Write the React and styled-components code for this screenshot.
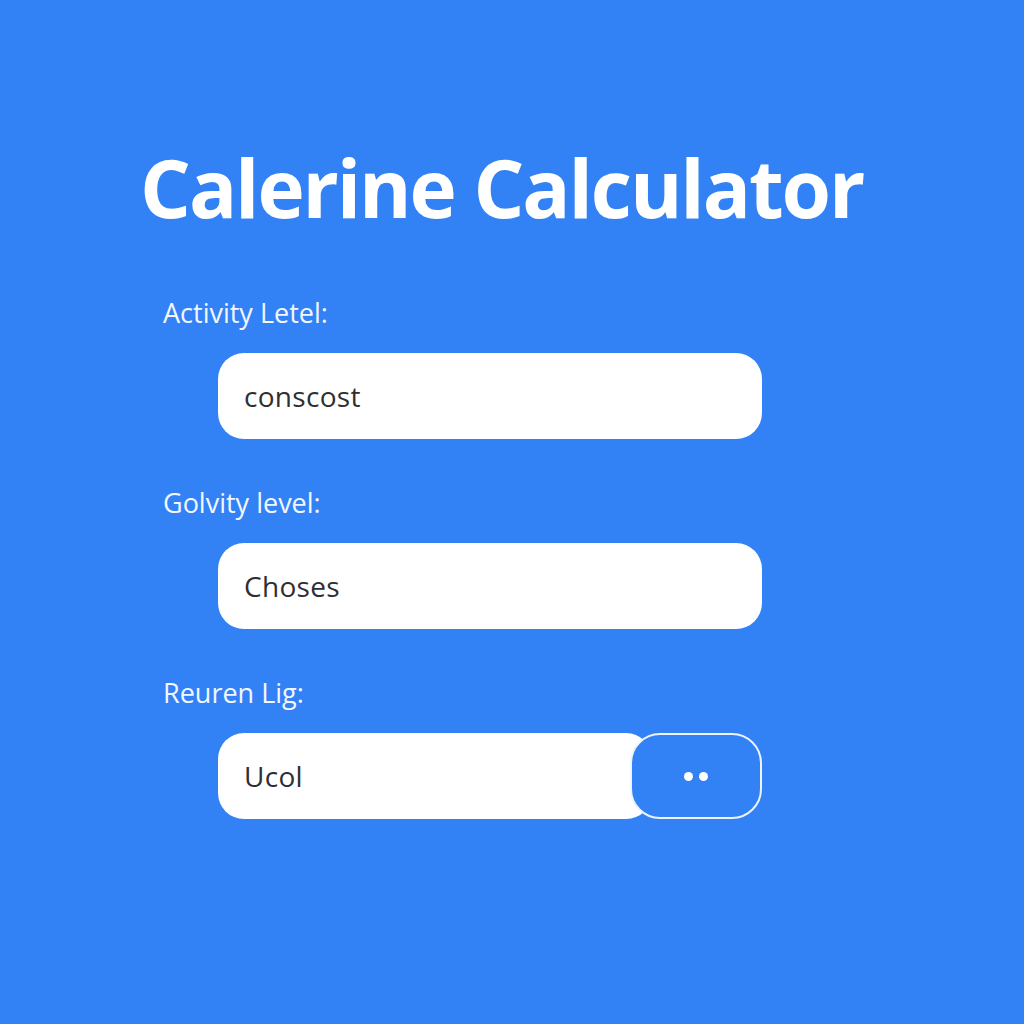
import React from "react";
import styled, { createGlobalStyle } from "styled-components";

const Global = createGlobalStyle`
  html, body { margin: 0; padding: 0; background: #3282f5; }
  body { font-family: "Open Sans", "Liberation Sans", sans-serif; }
`;

const Page = styled.div`
  width: 1024px;
  height: 1024px;
  box-sizing: border-box;
  background: #3282f5;
  display: flex;
  flex-direction: column;
  padding: 137px 0 0 163px;
`;

const Title = styled.h1`
  margin: 0 0 58px -23px;
  font-family: "Open Sans", sans-serif;
  font-weight: 700;
  font-size: 80px;
  line-height: 100px;
  letter-spacing: -2.1px;
  color: #ffffff;
  white-space: nowrap;
`;

const Form = styled.div`
  display: flex;
  flex-direction: column;
  gap: 46px;
`;

const Field = styled.div`
  display: flex;
  flex-direction: column;
  gap: 22px;
`;

const Label = styled.label`
  font-family: "Open Sans", sans-serif;
  font-weight: 400;
  font-size: 27px;
  line-height: 36px;
  letter-spacing: 0px;
  color: #f2f6ff;
`;

const Row = styled.div`
  display: flex;
  align-items: center;
  margin-left: 55px;
  width: 544px;
`;

const Input = styled.div`
  box-sizing: border-box;
  flex: 1;
  height: 86px;
  border-radius: 26px;
  background: #ffffff;
  display: flex;
  align-items: center;
  padding-left: 26px;
  font-family: "Open Sans", sans-serif;
  font-weight: 500;
  font-size: 28px;
  letter-spacing: 0.3px;
  color: #2f2f33;
  margin-right: ${(p) => (p.$joined ? "-22px" : "0")};
`;

const DotsButton = styled.button`
  box-sizing: border-box;
  position: relative;
  width: 132px;
  height: 86px;
  border-radius: 30px;
  border: 2px solid #eef4ff;
  background: #3282f5;
  display: flex;
  align-items: center;
  justify-content: center;
  gap: 6px;
  padding: 0;
`;

const Dot = styled.span`
  width: 9px;
  height: 9px;
  border-radius: 50%;
  background: #ffffff;
`;

export default function App() {
  return (
    <>
      <Global />
      <Page>
        <Title>Calerine Calculator</Title>
        <Form>
          <Field>
            <Label>Activity Letel:</Label>
            <Row>
              <Input>conscost</Input>
            </Row>
          </Field>
          <Field>
            <Label>Golvity level:</Label>
            <Row>
              <Input>Choses</Input>
            </Row>
          </Field>
          <Field>
            <Label>Reuren Lig:</Label>
            <Row>
              <Input $joined>Ucol</Input>
              <DotsButton aria-label="More options">
                <Dot />
                <Dot />
              </DotsButton>
            </Row>
          </Field>
        </Form>
      </Page>
    </>
  );
}
